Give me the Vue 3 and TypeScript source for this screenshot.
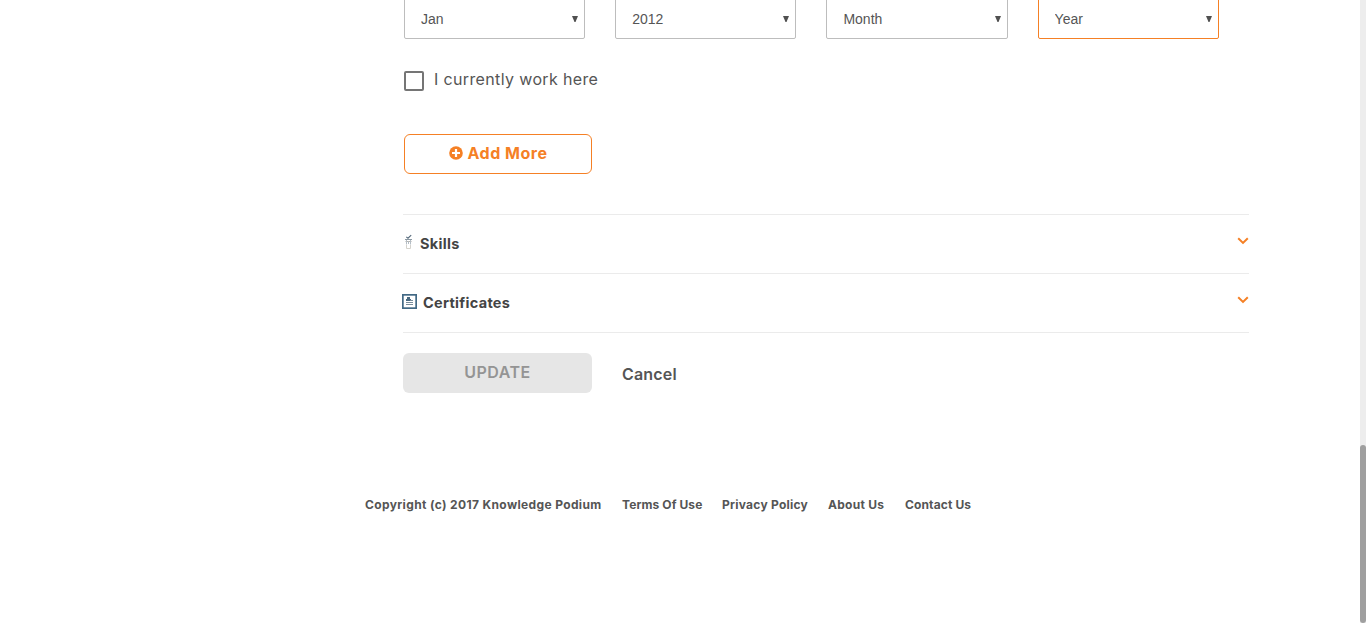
<script setup lang="ts">
import { ref } from 'vue'

interface DateField {
  label: string
  value: string
  options: string[]
  invalid?: boolean
}

const fields = ref<DateField[]>([
  { label: 'Start month', value: 'Jan', options: ['Month', 'Jan', 'Feb', 'Mar'] },
  { label: 'Start year', value: '2012', options: ['Year', '2012', '2013', '2014'] },
  { label: 'End month', value: 'Month', options: ['Month', 'Jan', 'Feb', 'Mar'] },
  { label: 'End year', value: 'Year', options: ['Year', '2012', '2013', '2014'], invalid: true },
])
const current = ref(false)
const links = [
  { text: 'Terms Of Use', cls: 'terms' },
  { text: 'Privacy Policy', cls: 'privacy' },
  { text: 'About Us', cls: 'about' },
  { text: 'Contact Us', cls: 'contact' },
]
</script>

<template>
  <div class="page">
    <div class="content">
      <main>
        <div class="dates">
          <div v-for="f in fields" :key="f.label" class="field">
            <select v-model="f.value" :class="{ invalid: f.invalid }" :aria-label="f.label">
              <option v-for="o in f.options" :key="o">{{ o }}</option>
            </select>
            <svg class="arrow" width="6" height="6" viewBox="0 0 6 6"><path d="M0 0H6L3.5 6H2.5Z" fill="#505050" /></svg>
          </div>
        </div>

        <label class="check">
          <input v-model="current" type="checkbox" />
          <span>I currently work here</span>
        </label>

        <button class="add" type="button">
          <svg width="14" height="14" viewBox="0 0 14 14">
            <circle cx="7" cy="7" r="6.8" fill="#f58025" />
            <path d="M7 3V11M3 7H11" stroke="#fff" stroke-width="2.2" />
          </svg>
          <span>Add More</span>
        </button>

        <section class="panels">
          <div class="panel">
            <svg class="skill-icon" width="9" height="16" viewBox="0 0 9 16" fill="none">
              <path d="M2.3 2.8L4 4.2L7.2 1.2" stroke="#53687a" stroke-width="1.1" />
              <path d="M1 5.5H8" stroke="#8b98a2" />
              <path d="M1.5 7.5H7.5" stroke="#b9b4ad" />
              <path d="M2.5 6V10.5M6.5 6V10.5M4.5 7V10" stroke="#b4bdc5" />
              <path d="M2.5 11V14.5H6.5V11" stroke="#d4d2cc" />
            </svg>
            <h3 class="skills">Skills</h3>
            <svg class="chevron" width="12" height="8" viewBox="0 0 12 8"><path d="M1.2 1.2L6 5.9L10.8 1.2" /></svg>
          </div>
          <div class="panel">
            <svg class="cert-icon" width="15" height="15" viewBox="0 0 15 15" fill="none">
              <rect x=".85" y=".85" width="13.3" height="13.3" stroke="#426985" stroke-width="1.7" />
              <path d="M5 3H8V5H9V7H4V5H5Z" fill="#496980" />
              <path d="M8 6.5H11M4 8.5H11M4 10.5H11" stroke="#788c9b" />
            </svg>
            <h3 class="certificates">Certificates</h3>
            <svg class="chevron" width="12" height="8" viewBox="0 0 12 8"><path d="M1.2 1.2L6 5.9L10.8 1.2" /></svg>
          </div>
        </section>

        <div class="actions">
          <button class="update" type="button" disabled>UPDATE</button>
          <a class="cancel">Cancel</a>
        </div>
      </main>

      <footer>
        <span class="copyright">Copyright (c) 2017 Knowledge Podium</span>
        <a v-for="l in links" :key="l.text" :class="l.cls">{{ l.text }}</a>
      </footer>
    </div>
    <div class="track"><div class="thumb"></div></div>
  </div>
</template>

<style>
body { overflow: hidden; background: #fff; }
</style>

<style scoped>
.page { display: flex; height: 623px; overflow: hidden; color: #555; font-family: Inter, "Liberation Sans", sans-serif; }
.page * { box-sizing: border-box; }
.content { flex: 1; min-width: 0; }
main { margin-left: 403px; width: 847px; }
.dates { display: flex; gap: 30px; height: 39px; margin-left: 1px; width: 814.8px; align-items: flex-end; }
.field { position: relative; flex: 1; height: 42px; }
select { display: block; appearance: none; width: 100%; height: 42px; margin: 0; padding: 2px 16px 0; border: 1px solid #bdbdbd; border-radius: 2px; background: #fff; color: #555; font: 14px/38px "Liberation Sans", sans-serif; outline: none; }
select.invalid { border-color: #f58025; }
.arrow { position: absolute; right: 7px; top: 19px; pointer-events: none; }
.check { display: flex; width: 220px; height: 20px; margin: 32px 0 0 1px; }
.check input { appearance: none; width: 20px; height: 20px; margin: 0; border: 2px solid #757575; border-radius: 2px; }
.check span { margin: -2px 0 0 10px; font-size: 16px; line-height: 20px; letter-spacing: .36px; white-space: nowrap; }
.add { display: flex; align-items: center; justify-content: center; width: 188px; height: 40px; margin: 43px 0 0 1px; padding: 0 0 2px; border: 1px solid #f58025; border-radius: 6px; background: #fff; color: #f58025; font: 700 16px/20px Inter, sans-serif; letter-spacing: .5px; }
.add span { margin-left: 5px; white-space: nowrap; }
.panels { width: 846px; margin-top: 40px; border-top: 1px solid #ebebeb; }
.panel { display: flex; height: 59px; border-bottom: 1px solid #ebebeb; }
h3 { margin: 19px 0 0; color: #444; font-size: 14.5px; font-weight: 700; line-height: 20px; letter-spacing: .3px; white-space: nowrap; }
.skill-icon { margin: 19px 0 0 1px; }
.skills { margin-left: 7px; }
.cert-icon { margin: 20px 0 0 -1px; }
.certificates { margin-left: 6px; }
.chevron { margin: 22px 0 0 auto; }
.chevron path { fill: none; stroke: #f58025; stroke-width: 2; }
.actions { display: flex; margin-top: 20px; height: 40px; }
.update { width: 189px; height: 40px; padding: 0 0 2px; border: 0; border-radius: 6px; background: #e6e6e6; color: #949494; font: 600 16px/20px Inter, sans-serif; letter-spacing: .5px; }
.cancel { margin: 11px 0 0 30px; font-size: 16px; font-weight: 600; line-height: 20px; letter-spacing: .17px; }
footer { display: flex; margin: 104px 0 0 365px; font-size: 12px; font-weight: 700; line-height: 16px; white-space: nowrap; }
footer > * { flex: none; }
.copyright { width: 257px; letter-spacing: .36px; }
.terms { width: 100px; letter-spacing: .1px; }
.privacy { width: 106px; letter-spacing: .25px; }
.about { width: 77px; letter-spacing: .27px; }
.contact { letter-spacing: .12px; }
.track { flex: none; width: 6px; height: 623px; background: #ededed; padding-top: 445px; }
.thumb { height: 178px; border-radius: 3px; background: #9f9f9f; }
</style>
